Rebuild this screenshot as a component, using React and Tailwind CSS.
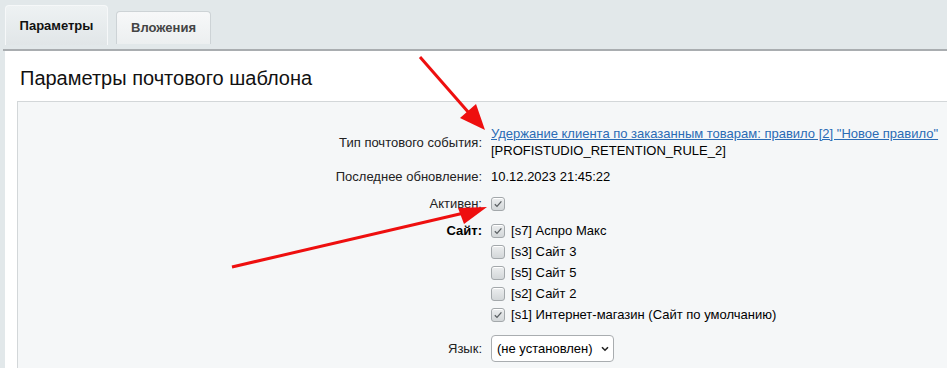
const sites = [
  { id: 's7', name: 'Аспро Макс', checked: true },
  { id: 's3', name: 'Сайт 3', checked: false },
  { id: 's5', name: 'Сайт 5', checked: false },
  { id: 's2', name: 'Сайт 2', checked: false },
  { id: 's1', name: 'Интернет-магазин (Сайт по умолчанию)', checked: true },
];

function Checkbox({ checked }) {
  return (
    <span className="flex h-[14px] w-[14px] shrink-0 items-center justify-center rounded-[3px] border border-[#a3a8ab] bg-gradient-to-b from-[#eceeef] to-[#d3d7d9] shadow-[inset_0_1px_0_#fff]">
      {checked && (
        <svg width="10" height="10" viewBox="0 0 10 10">
          <path d="M1.8 5.2 L4 7.4 L8.4 2.4" fill="none" stroke="#5a5f62" strokeWidth="1.3" />
        </svg>
      )}
    </span>
  );
}

export default function App() {
  return (
    <div
      className="relative h-[368px] w-[947px] overflow-hidden bg-[#e2e8ea] text-[13px] text-[#222]"
      style={{ fontFamily: '"Liberation Sans", Arial, sans-serif' }}
    >
      {/* Tabs */}
      <div className="flex h-[49px] items-start gap-[8px] pl-[5px]">
        <div className="mt-[5px] flex h-[40px] w-[103px] items-center justify-center rounded-t-[4px] border border-b-0 border-[#f6f8f9] bg-gradient-to-b from-[#eef2f3] to-[#e1e6e8] font-bold text-[#111]">
          Параметры
        </div>
        <div className="mt-[11px] flex h-[33px] w-[95px] items-center justify-center rounded-t-[4px] border border-b-0 border-[#cdd3d6] bg-gradient-to-b from-[#f7f8f9] to-[#eceff0] font-bold text-[#444]">
          Вложения
        </div>
      </div>
      <div className="ml-[3px] h-[2px] bg-[#a9adb0]" />

      {/* Panel */}
      <div className="ml-[5px] h-full bg-white">
        <h1 className="pl-[15px] pt-[15px] text-[20px] leading-[24px] text-[#111]">
          Параметры почтового шаблона
        </h1>

        <div className="ml-[12px] mt-[11px] h-full border-l border-t border-[#d3d7d9] bg-[#f5f7f8] pt-[23px]">
          {/* Event type */}
          <div className="flex items-center leading-[17px]">
            <div className="w-[473px] pr-[9px] text-right">Тип почтового события:</div>
            <div>
              <a href="#" className="text-[#2a6bb5] underline">
                Удержание клиента по заказанным товарам: правило [2] "Новое правило"
              </a>
              <div className="text-black">[PROFISTUDIO_RETENTION_RULE_2]</div>
            </div>
          </div>

          {/* Last update */}
          <div className="mt-[9px] flex items-center leading-[17px]">
            <div className="w-[473px] pr-[9px] text-right">Последнее обновление:</div>
            <div className="text-black">10.12.2023 21:45:22</div>
          </div>

          {/* Active */}
          <div className="mt-[10px] flex h-[17px] items-center">
            <div className="w-[473px] pr-[9px] text-right">Активен:</div>
            <Checkbox checked />
          </div>

          {/* Sites */}
          <div className="mt-[8px] flex">
            <div className="flex h-[21px] w-[473px] items-center justify-end pr-[9px] font-bold text-black">
              Сайт:
            </div>
            <div className="flex flex-col">
              {sites.map((s) => (
                <label key={s.id} className="flex h-[21px] items-center gap-[6px] text-black">
                  <Checkbox checked={s.checked} />
                  <span>[{s.id}] {s.name}</span>
                </label>
              ))}
            </div>
          </div>

          {/* Language */}
          <div className="mt-[10px] flex items-center">
            <div className="w-[473px] pr-[9px] text-right">Язык:</div>
            <div className="flex h-[27px] w-[123px] items-center gap-[8px] rounded-[4px] border border-[#a9adb0] bg-white pl-[5px] text-black">
              <span>(не установлен)</span>
              <svg width="8" height="6" viewBox="0 0 8 6">
                <path d="M1 1.2 L4 4.2 L7 1.2" fill="none" stroke="#222" strokeWidth="1.6" />
              </svg>
            </div>
          </div>
        </div>
      </div>

      {/* Red annotation arrows */}
      <svg className="pointer-events-none absolute left-0 top-0" width="947" height="368">
        <line x1="420" y1="57" x2="469" y2="113" stroke="#ee0f0f" strokeWidth="3" />
        <polygon points="485,130 460,118 476,104" fill="#ee0f0f" />
        <line x1="232" y1="267" x2="464" y2="213" stroke="#ee0f0f" strokeWidth="3" />
        <polygon points="487,207 458,208 464,224" fill="#ee0f0f" />
      </svg>
    </div>
  );
}
